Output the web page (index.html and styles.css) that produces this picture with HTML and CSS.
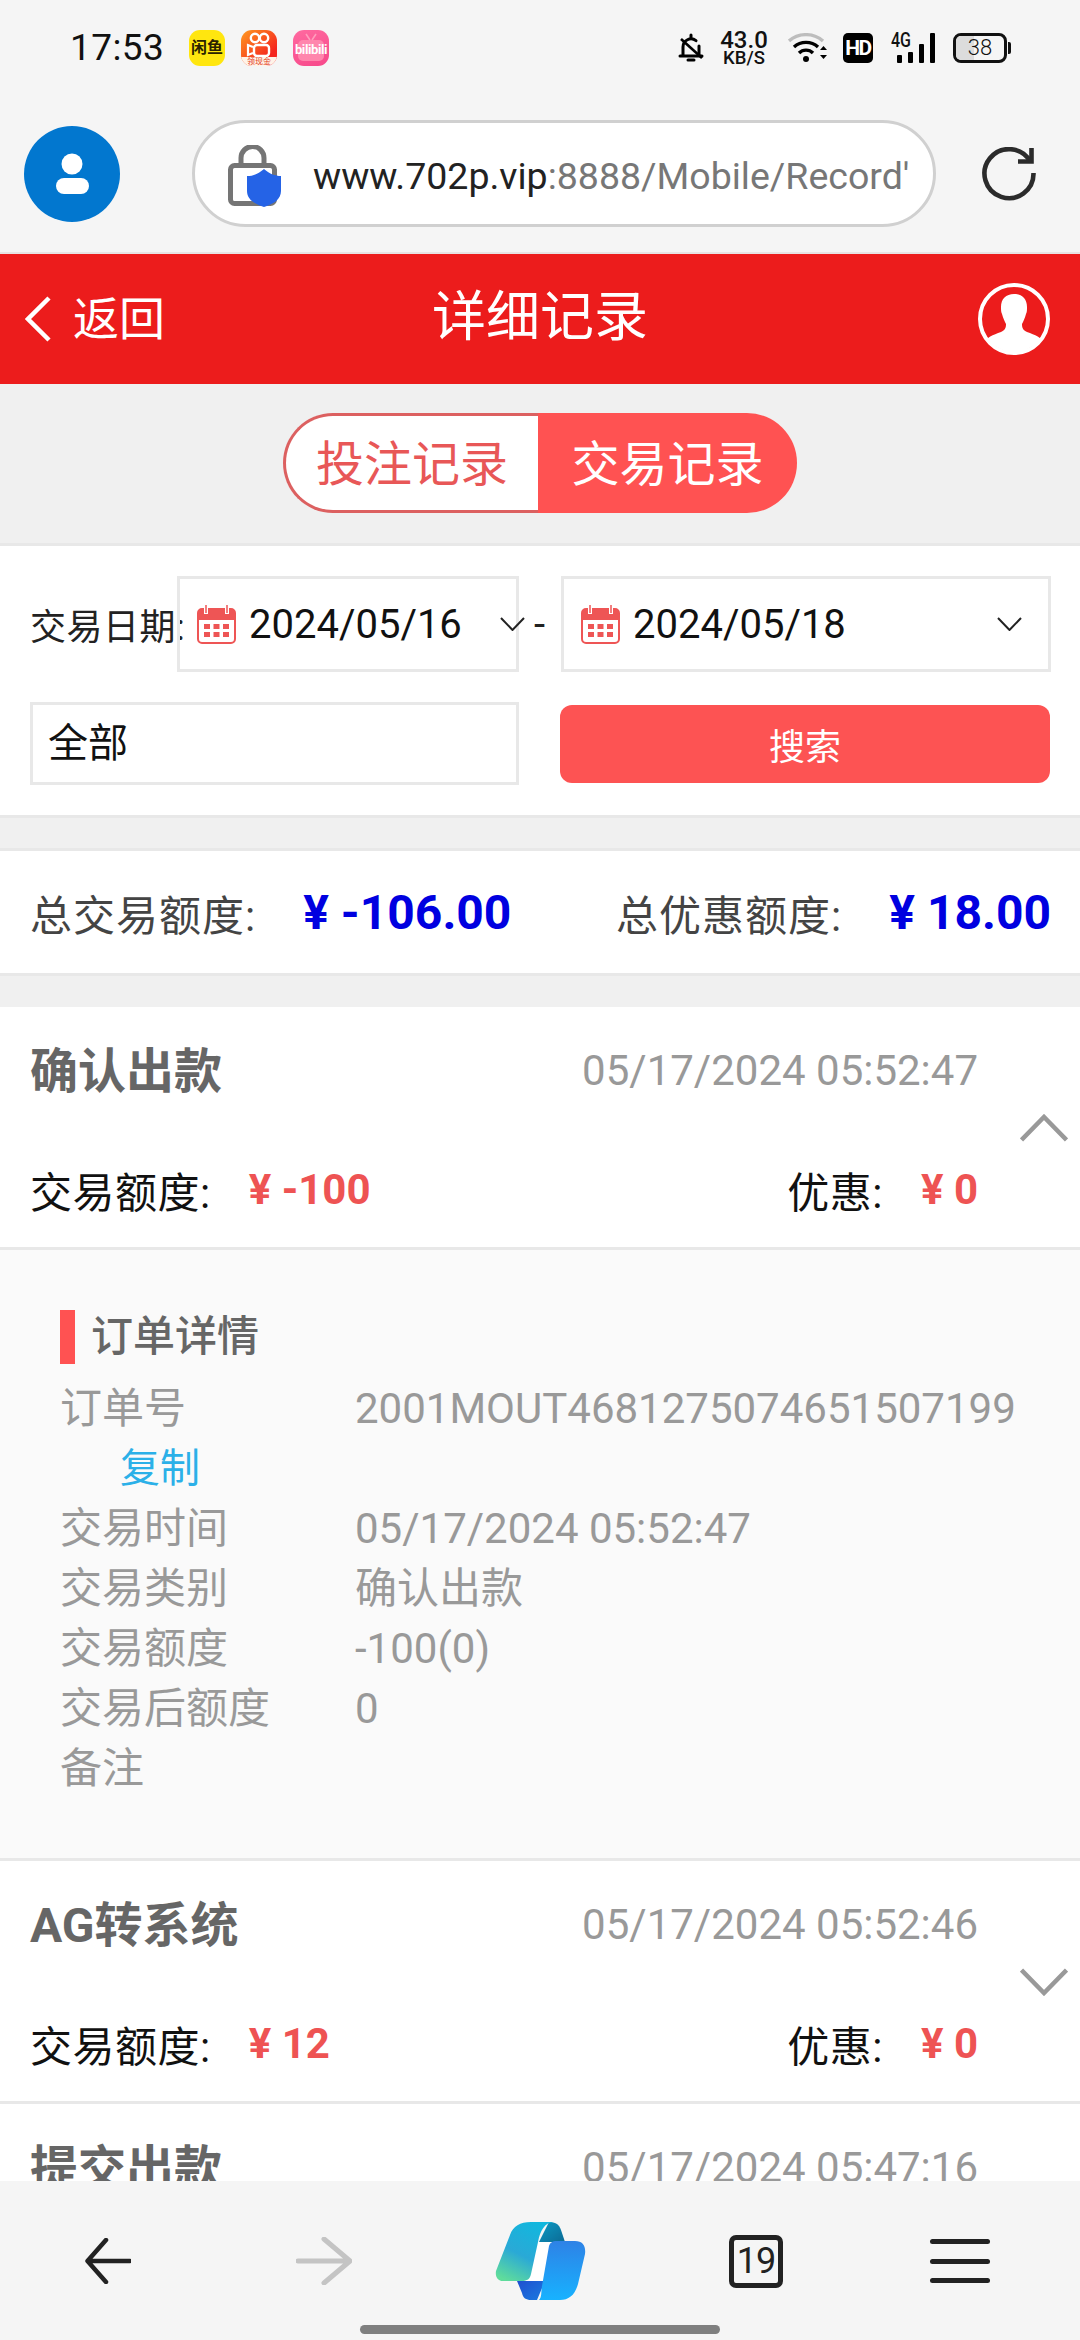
FILE: index.html
```html
<!DOCTYPE html>
<html lang="zh-CN">
<head>
<meta charset="utf-8">
<title>详细记录</title>
<link rel="stylesheet" href="styles.css">
</head>
<body>
<div class="phone">
  <div class="statusbar">
    <span class="time">17:53</span>
    <span class="app app-xianyu">闲鱼</span>
    <span class="app app-kuaishou">
      <svg viewBox="0 0 36 36" width="36" height="36"><circle cx="14" cy="8" r="4.2" fill="none" stroke="#fff" stroke-width="2.4"/><circle cx="23" cy="8" r="4.2" fill="none" stroke="#fff" stroke-width="2.4"/><rect x="13" y="15" width="15" height="11" rx="3" fill="none" stroke="#fff" stroke-width="2.4"/><path d="M12 17l-5-2v10l5-2" fill="none" stroke="#fff" stroke-width="2.2"/></svg>
      <span class="ks-strip">领现金</span>
    </span>
    <span class="app app-bili">
      <svg class="bili-tv" viewBox="0 0 36 36" width="36" height="36"><rect x="5" y="10" width="26" height="21" rx="5" fill="#ff86ad"/><path d="M13 4l4 6M23 4l-4 6" stroke="#ff9cbc" stroke-width="1.6"/></svg>
      <span class="bili-text">bilibili</span>
    </span>
    <div class="sys">
      <svg class="i-bell" viewBox="0 0 26 30" width="26" height="30"><path d="M13 2v3M5 22V14a8 8 0 0 1 13-6.3M21 13v9M2 23h22M10 27h6" fill="none" stroke="#000" stroke-width="3" stroke-linecap="round"/><path d="M3 6l21 19" stroke="#000" stroke-width="2.6"/></svg>
      <div class="speed"><span class="speed-n">43.0</span><span class="speed-u">KB/S</span></div>
      <svg class="i-wifi" viewBox="0 0 40 30" width="40" height="30"><path d="M1 8a26 26 0 0 1 34 0" fill="none" stroke="#bdbdbd" stroke-width="3.4"/><path d="M6 14a18 18 0 0 1 24 0" fill="none" stroke="#000" stroke-width="3.4"/><path d="M11 20a10 10 0 0 1 14 0" fill="none" stroke="#000" stroke-width="3.4"/><circle cx="18" cy="26" r="3" fill="#000"/><path d="M32 17l3.5-4 3.5 4zM32 22l3.5 4 3.5-4z" fill="#000"/></svg>
      <span class="hd">HD</span>
      <div class="signal">
        <span class="sig-4g">4G</span>
        <span class="bar bar1"></span><span class="bar bar2"></span><span class="bar bar3"></span><span class="bar bar4"></span>
      </div>
      <div class="battery"><span class="batt-body"><span class="batt-fill"></span><span class="batt-num">38</span></span><span class="batt-tip"></span></div>
    </div>
  </div>

  <div class="toolbar">
    <span class="avatar">
      <svg viewBox="0 0 96 96" width="96" height="96"><circle cx="48" cy="38" r="10.5" fill="#fff"/><path d="M40 52h17a8 8 0 0 1 0 16H40a8 8 0 0 1 0-16z" fill="#fff"/></svg>
    </span>
    <div class="urlbar">
      <svg class="lock" viewBox="0 0 53 62" width="53" height="62"><rect x="2.500" y="20.500" width="44" height="38" rx="4" fill="none" stroke="#757575" stroke-width="5"/><path d="M13 20V13a11 11 0 0 1 23 0v7" fill="none" stroke="#757575" stroke-width="5"/><path d="M36 24c6 5 11 7 17 7v15c0 8-7 13-17 16-10-3-17-8-17-16V31c6 0 11-2 17-7z" fill="#2563e6"/></svg>
      <span class="url"><span class="url-host">www.702p.vip</span>:8888/Mobile/Record'</span>
    </div>
    <svg class="refresh" viewBox="0 0 54 54" width="54" height="54"><path d="M48 14A24.500 24.500 0 1 0 51.500 26" fill="none" stroke="#2b2b2b" stroke-width="4.600"/><path d="M36 14.500h13.500V1" fill="none" stroke="#2b2b2b" stroke-width="4.600"/></svg>
  </div>

  <div class="page">
    <header class="head">
      <div class="head-left">
        <svg viewBox="0 0 26 46" width="26" height="46"><path d="M24 2L3 23l21 21" fill="none" stroke="#fff" stroke-width="4.500"/></svg>
        <span class="back">返回</span>
      </div>
      <h1 class="head-title">详细记录</h1>
      <div class="head-right">
        <svg viewBox="0 0 72 72" width="72" height="72"><defs><clipPath id="uc"><circle cx="36" cy="36" r="33"/></clipPath></defs><g clip-path="url(#uc)"><path d="M36 11c8 0 13 5 13 13 0 3 0 5-1 7-1 4-3 8-4 10 0 4 1 6 5 8 8 3 15 5 17 12v11H6V61c2-7 9-9 17-12 4-2 5-4 5-8-1-2-3-6-4-10-1-2-1-4-1-7 0-8 5-13 13-13z" fill="#fff"/></g><circle cx="36" cy="36" r="34" fill="none" stroke="#fff" stroke-width="4"/></svg>
      </div>
    </header>

    <div class="tabs-area">
      <div class="tabs">
        <span class="tab">投注记录</span>
        <span class="tab tab-on">交易记录</span>
      </div>
    </div>

    <section class="filter">
      <div class="filter-row">
        <span class="filter-label">交易日期:</span>
        <div class="datebox datebox-from">
          <svg class="cal" viewBox="0 0 39 39" width="39" height="39"><rect x="1" y="4" width="37" height="34" rx="4" fill="#fff" stroke="#ee5555" stroke-width="2"/><path d="M1 8a4 4 0 0 1 4-4h29a4 4 0 0 1 4 4v7H1z" fill="#ee5555"/><path d="M9 1v8M30 1v8" stroke="#fff" stroke-width="4"/><path d="M9 0v8M30 0v8" stroke="#ee5555" stroke-width="1.500"/><path d="M7 19h6v5H7zM16.500 19h6v5h-6zM26 19h6v5h-6zM7 27h6v5H7zM16.500 27h6v5h-6zM26 27h6v5h-6z" fill="#ee5555"/></svg>
          <span class="date">2024/05/16</span>
          <svg class="caret" viewBox="0 0 25 14" width="25" height="14"><path d="M1 1l11.500 12L24 1" fill="none" stroke="#222" stroke-width="2"/></svg>
        </div>
        <span class="dash">-</span>
        <div class="datebox datebox-to">
          <svg class="cal" viewBox="0 0 39 39" width="39" height="39"><rect x="1" y="4" width="37" height="34" rx="4" fill="#fff" stroke="#ee5555" stroke-width="2"/><path d="M1 8a4 4 0 0 1 4-4h29a4 4 0 0 1 4 4v7H1z" fill="#ee5555"/><path d="M9 1v8M30 1v8" stroke="#fff" stroke-width="4"/><path d="M9 0v8M30 0v8" stroke="#ee5555" stroke-width="1.500"/><path d="M7 19h6v5H7zM16.500 19h6v5h-6zM26 19h6v5h-6zM7 27h6v5H7zM16.500 27h6v5h-6zM26 27h6v5h-6z" fill="#ee5555"/></svg>
          <span class="date">2024/05/18</span>
          <svg class="caret" viewBox="0 0 25 14" width="25" height="14"><path d="M1 1l11.500 12L24 1" fill="none" stroke="#222" stroke-width="2"/></svg>
        </div>
      </div>
      <div class="filter-row filter-row2">
        <div class="select">全部</div>
        <button class="search">搜索</button>
      </div>
    </section>

    <section class="summary">
      <div class="sum-item"><span class="sum-label">总交易额度:</span><span class="sum-val">¥ -106.00</span></div>
      <div class="sum-item"><span class="sum-label">总优惠额度:</span><span class="sum-val">¥ 18.00</span></div>
    </section>

    <article class="card">
      <div class="card-top"><span class="card-title">确认出款</span><span class="card-date">05/17/2024 05:52:47</span></div>
      <div class="card-bottom">
        <div class="kv"><span class="k">交易额度:</span><span class="v">¥ -100</span></div>
        <div class="kv"><span class="k">优惠:</span><span class="v">¥ 0</span></div>
      </div>
      <svg class="toggle" viewBox="0 0 48 28" width="48" height="28"><path d="M1.500 26L24 3l22.500 23" fill="none" stroke="#999" stroke-width="4.500"/></svg>
    </article>

    <section class="detail">
      <h2 class="detail-head">订单详情</h2>
      <div class="drow"><span class="dk">订单号</span><span class="dv">2001MOUT4681275074651507199</span></div>
      <div class="drow"><span class="copy">复制</span></div>
      <div class="drow"><span class="dk">交易时间</span><span class="dv">05/17/2024 05:52:47</span></div>
      <div class="drow"><span class="dk">交易类别</span><span class="dv">确认出款</span></div>
      <div class="drow"><span class="dk">交易额度</span><span class="dv">-100(0)</span></div>
      <div class="drow"><span class="dk">交易后额度</span><span class="dv">0</span></div>
      <div class="drow"><span class="dk">备注</span></div>
    </section>

    <article class="card">
      <div class="card-top"><span class="card-title">AG转系统</span><span class="card-date">05/17/2024 05:52:46</span></div>
      <div class="card-bottom">
        <div class="kv"><span class="k">交易额度:</span><span class="v">¥ 12</span></div>
        <div class="kv"><span class="k">优惠:</span><span class="v">¥ 0</span></div>
      </div>
      <svg class="toggle" viewBox="0 0 48 28" width="48" height="28"><path d="M1.500 2L24 25 46.500 2" fill="none" stroke="#999" stroke-width="4.500"/></svg>
    </article>

    <article class="card">
      <div class="card-top"><span class="card-title">提交出款</span><span class="card-date">05/17/2024 05:47:16</span></div>
    </article>
  </div>

  <nav class="nav">
    <div class="nav-row">
      <svg viewBox="0 0 46 46" width="46" height="46"><path d="M21 2L2.500 23 21 44M3 23h42" fill="none" stroke="#222" stroke-width="4.500" stroke-linecap="round" stroke-linejoin="round"/></svg>
      <svg viewBox="0 0 56 48" width="56" height="48"><path d="M28 2l26 22-26 22M2 24h51" fill="none" stroke="#c4c4c4" stroke-width="5" stroke-linecap="round" stroke-linejoin="round"/></svg>
      <svg viewBox="0 0 91 78" width="91" height="78">
        <defs>
          <linearGradient id="cpA" x1="0.700" y1="0" x2="0.200" y2="1"><stop offset="0" stop-color="#11b7de"/><stop offset=".55" stop-color="#2aa9d6"/><stop offset="1" stop-color="#5fdc9c"/></linearGradient>
          <linearGradient id="cpB" x1="0.500" y1="0" x2="0.500" y2="1"><stop offset="0" stop-color="#2e82e6"/><stop offset="1" stop-color="#17b2ff"/></linearGradient>
          <linearGradient id="cpC" x1="0" y1="0" x2="1" y2="1"><stop offset="0" stop-color="#0c9ac4"/><stop offset="1" stop-color="#0c6a94"/></linearGradient>
          <linearGradient id="cpD" x1="0" y1="0" x2="1" y2="1"><stop offset="0" stop-color="#1f4fd0"/><stop offset="1" stop-color="#1a7be0"/></linearGradient>
        </defs>
        <path d="M43 20h20L50 59H31z" fill="#fff"/>
        <path d="M54 0c6 0 10 2 12 8l4 12H44z" fill="url(#cpC)"/>
        <path d="M22 59h28L42 78h-6c-5 0-8-2-9-7z" fill="url(#cpD)"/>
        <path d="M36 0h22c-8 1-13 8-15 20l-7 32c-1 5-4 7-9 7H8c-5 0-8-4-7-10L15 13C18 4 25 0 36 0z" fill="url(#cpA)"/>
        <path d="M62 19H80c8 0 11 5 10 13l-7 30c-3 11-9 16-18 16H44c3-3 2-8 3-14l7-40c1-3 3-5 8-5z" fill="url(#cpB)"/>
      </svg>
      <span class="tabcount">19</span>
      <span class="menu"><span></span><span></span><span></span></span>
    </div>
    <div class="homebar"></div>
  </nav>
</div>
</body>
</html>
```

FILE: styles.css
```css
* { box-sizing: border-box; }
html, body { margin: 0; padding: 0; }
body { width: 1080px; height: 2340px; overflow: hidden; background: #f5f5f5; font-family: Roboto, "Noto Sans CJK SC", sans-serif; }
.phone { width: 1080px; height: 2340px; display: flex; flex-direction: column; overflow: hidden; }

/* status bar */
.statusbar { height: 120px; flex: none; display: flex; align-items: flex-start; padding: 30px 69px 0 70px; background: #f5f5f5; }
.time { font-size: 37px; line-height: 36px; color: #111; width: 119px; letter-spacing: .4px; }
.app { position: relative; width: 36px; height: 36px; border-radius: 11px; margin-right: 16px; overflow: hidden; display: flex; align-items: center; justify-content: center; }
.app-xianyu { background: #ffe60f; color: #2a2200; font-size: 16px; font-weight: 700; line-height: 36px; letter-spacing: 0; }
.app-kuaishou { background: linear-gradient(135deg, #ff9a1f, #f5261f 75%); }
.ks-strip { position: absolute; left: 0; right: 0; bottom: 0; height: 9px; background: #fff3e8; color: #e23b20; font-size: 8px; line-height: 9px; text-align: center; }
.app-bili { background: linear-gradient(160deg, #ff6aa0, #f7488a); }
.bili-tv { position: absolute; left: 0; top: 0; }
.bili-text { position: relative; color: #fff; font-size: 13px; line-height: 14px; font-weight: 700; margin-top: 3px; letter-spacing: -.4px; }
.sys { margin-left: auto; display: flex; align-items: flex-start; height: 36px; }
.i-bell { margin-top: 3px; }
.speed { width: 48px; margin-left: 16px; display: flex; flex-direction: column; align-items: center; color: #111; }
.speed-n { font-size: 24px; line-height: 20px; font-weight: 500; }
.speed-u { font-size: 18.500px; line-height: 16px; font-weight: 500; }
.i-wifi { margin-left: 20px; margin-top: 3px; }
.hd { width: 30px; height: 30px; margin-top: 3px; margin-left: 15px; border-radius: 5px; background: #000; color: #fff; font-size: 21px; line-height: 30px; font-weight: 700; text-align: center; letter-spacing: -1.500px; }
.signal { position: relative; width: 44px; height: 30px; margin-top: 3px; margin-left: 18px; }
.sig-4g { position: absolute; left: 0; top: -2px; font-size: 20px; line-height: 18px; font-weight: 500; color: #111; transform: scaleX(.8); transform-origin: left; }
.bar { position: absolute; bottom: 0; width: 5px; background: #000; border-radius: 1px; }
.bar1 { left: 6px; height: 8px; }
.bar2 { left: 17px; height: 11px; }
.bar3 { left: 28px; height: 19px; }
.bar4 { left: 39px; height: 30px; }
.battery { margin-top: 3px; margin-left: 18px; display: flex; align-items: center; }
.batt-body { position: relative; width: 54px; height: 30px; border: 3px solid #111; border-radius: 8px; overflow: hidden; display: flex; align-items: center; justify-content: center; }
.batt-fill { position: absolute; left: 0; top: 0; bottom: 0; width: 38%; background: #dcdcdc; }
.batt-num { position: relative; font-size: 22px; font-weight: 300; color: #111; line-height: 24px; }
.batt-tip { width: 3px; height: 12px; margin-left: 1px; background: #111; border-radius: 0 2px 2px 0; }

/* browser toolbar */
.toolbar { height: 134px; flex: none; display: flex; align-items: center; padding: 0 0 25px 24px; background: #f5f5f5; border-bottom: 2px solid #e8e2e2; }
.avatar { width: 96px; height: 96px; border-radius: 50%; background: #0277cf; flex: none; }
.avatar svg { display: block; }
.urlbar { width: 744px; height: 107px; margin-left: 72px; background: #fff; border: 3px solid #d0d0d0; border-radius: 54px; display: flex; align-items: center; padding-left: 33px; overflow: hidden; flex: none; }
.lock { flex: none; margin-top: 4px; }
.url { margin-left: 32px; width: 595px; font-size: 37.500px; color: #777; white-space: nowrap; overflow: hidden; flex: none; padding-top: 4px; }
.url-host { color: #222; }
.refresh { margin-left: 46px; flex: none; }

/* page */
.page { flex: 1; min-height: 0; overflow: hidden; background: #f0f0f0; }
.head { height: 130px; background: #ec1c1c; display: grid; grid-template-columns: 1fr auto 1fr; align-items: center; padding: 0 30px; color: #fff; }
.head-left { display: flex; align-items: center; margin-left: -5px; }
.back { font-size: 46px; margin-left: 22px; line-height: 60px; }
.head-title { margin: 0; font-size: 54px; font-weight: 400; line-height: 68px; padding-bottom: 2px; }
.head-right { display: flex; justify-content: flex-end; }
.head svg { display: block; }

.tabs-area { height: 162px; padding-top: 29px; display: flex; justify-content: center; background: #f0f0f0; border-bottom: 3px solid #e8e8e8; }
.tabs { width: 514px; height: 100px; display: flex; }
.tab { width: 255px; font-size: 48px; line-height: 97px; text-align: center; color: #e85757; flex: none; background: #fff; border: 3px solid #dc6060; border-right: 0; border-radius: 50px 0 0 50px; }
.tab-on { flex: 1; background: #ff5252; color: #fff; border: 0; border-radius: 0 50px 50px 0; line-height: 103px; }

.filter { background: #fff; padding: 30px 30px 30px; border-bottom: 3px solid #e8e8e8; height: 272px; }
.filter-row { display: flex; align-items: center; position: relative; }
.filter-label { width: 147px; font-size: 36px; color: #222; white-space: nowrap; flex: none; letter-spacing: .5px; }
.datebox { height: 96px; border: 3px solid #e8e8e8; display: flex; align-items: center; position: relative; flex: none; }
.datebox-from { width: 342px; padding-left: 17px; }
.datebox-to { width: 490px; padding-left: 17px; }
.cal { flex: none; }
.date { margin-left: 13px; font-size: 40px; color: #111; line-height: 50px; padding-top: 2px; }
.caret { position: absolute; top: 38px; right: -9px; }
.datebox-to .caret { right: 26px; }
.dash { width: 42px; font-size: 40px; color: #222; text-align: center; flex: none; padding-right: 1px; }
.filter-row2 { margin-top: 30px; gap: 41px; }
.select { width: 489px; height: 83px; border: 3px solid #e8e8e8; font-size: 40px; line-height: 78px; padding-left: 15px; color: #111; flex: none; }
.search { width: 490px; height: 78px; border: 0; border-radius: 12px; background: #fd5353; color: #fff; font: 36px Roboto, "Noto Sans CJK SC", sans-serif; padding: 0; flex: none; }

.summary { margin: 30px 0 31px; height: 128px; background: #fff; border-top: 3px solid #e8e8e8; border-bottom: 3px solid #e8e8e8; display: flex; align-items: center; justify-content: space-between; padding: 0 29px 0 30px; }
.sum-item { display: flex; align-items: center; }
.sum-label { font-size: 42px; color: #444; margin-right: 47px; letter-spacing: 1px; }
.sum-val { font-size: 48px; font-weight: 700; color: #0000e0; }

.card { position: relative; background: #fff; border-bottom: 3px solid #e8e8e8; height: 243px; padding: 0 102px 0 30px; }
.card-top { height: 124px; display: flex; align-items: center; justify-content: space-between; }
.card-title { font-size: 48px; font-weight: 700; color: #666; padding-bottom: 4px; }
.card-date { font-size: 42px; color: #999; padding-top: 2px; }
.card-bottom { height: 116px; display: flex; align-items: center; justify-content: space-between; }
.kv { display: flex; align-items: center; }
.k { font-size: 42px; color: #111; margin-right: 38px; letter-spacing: .5px; }
.v { font-size: 42px; font-weight: 700; color: #ee5353; }
.toggle { position: absolute; top: 107px; right: 12px; }

.detail { background: #fafafa; border-bottom: 3px solid #e8e8e8; padding: 60px 0 0 60px; height: 611px; }
.detail-head { margin: 0 0 15px; height: 54px; border-left: 15px solid #ff5252; padding-left: 16px; font-size: 42px; line-height: 54px; font-weight: 500; color: #666; }
.drow { display: flex; height: 60px; line-height: 60px; font-size: 42px; color: #999; }
.dk { width: 295px; flex: none; }
.copy { margin-left: 60px; font-size: 40px; color: #2bb0e8; }

/* bottom nav */
.nav { height: 159px; flex: none; background: #f5f5f5; }
.nav-row { height: 144px; padding-top: 16px; display: grid; grid-template-columns: repeat(5, 216px); align-items: center; justify-items: center; }
.tabcount { width: 54px; height: 53px; border: 5px solid #222; border-radius: 7px; font-size: 36px; line-height: 43px; text-align: center; color: #222; letter-spacing: -1px; }
.menu { width: 60px; height: 44px; margin-right: 24px; display: flex; flex-direction: column; justify-content: space-between; }
.menu span { height: 5px; background: #222; border-radius: 3px; }
.homebar { width: 360px; height: 9px; margin: 0 auto; border-radius: 5px; background: #7f7f7f; }
```
